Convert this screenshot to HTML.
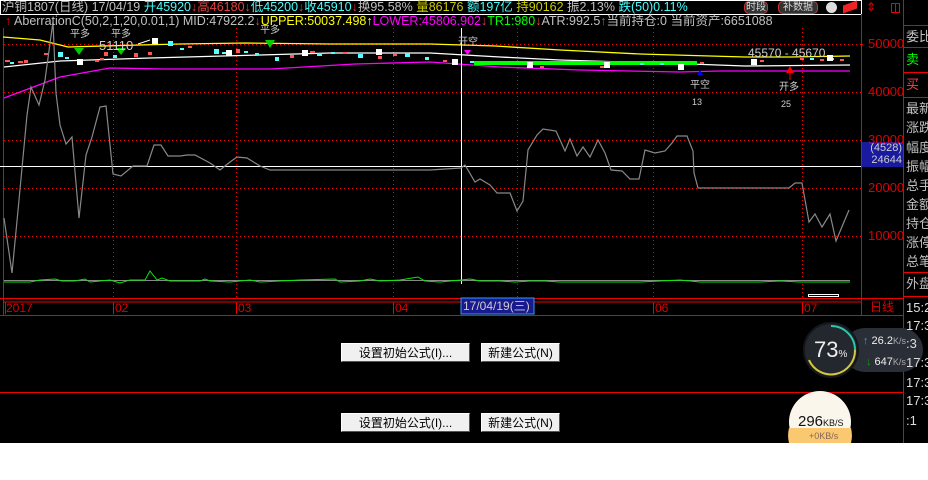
<!DOCTYPE html>
<html><head><meta charset="utf-8"><style>
body{margin:0;width:928px;height:480px;background:#fff;overflow:hidden;position:relative;font-family:"Liberation Sans","Noto Sans CJK SC",sans-serif}
#bk{position:absolute;left:0;top:0;width:928px;height:443px;background:#000}
.t{position:absolute;white-space:nowrap;font-size:12px;line-height:14px}
.h{font-size:12.5px}
.r{position:absolute;font-size:13px;color:#c0c0c0;left:906px;white-space:nowrap;line-height:16px}
.btn{position:absolute;height:19px;background:#f0f0f0;border:1px solid #fff;border-right-color:#555;border-bottom-color:#555;font-size:12px;line-height:19px;text-align:center;color:#000;box-sizing:border-box}
</style></head><body>
<div id="bk"></div>
<svg width="928" height="480" style="position:absolute;left:0;top:0">
<rect x="0.5" y="0.5" width="861" height="14" fill="none" stroke="#fff"/>
<g stroke="#e00" stroke-width="1" fill="none">
<line x1="3.5" y1="28" x2="3.5" y2="315"/>
<line x1="861.5" y1="14" x2="861.5" y2="315"/>
<line x1="903.5" y1="0" x2="903.5" y2="443"/>
<line x1="0" y1="298.5" x2="904" y2="298.5"/>
<line x1="0" y1="315.5" x2="904" y2="315.5"/>
<line x1="0" y1="392.5" x2="904" y2="392.5"/>
<line x1="904" y1="25.5" x2="928" y2="25.5"/>
<line x1="904" y1="47.5" x2="928" y2="47.5"/>
<line x1="904" y1="72.5" x2="928" y2="72.5"/>
<line x1="904" y1="97.5" x2="928" y2="97.5"/>
<line x1="904" y1="272.5" x2="928" y2="272.5"/>
<line x1="904" y1="296.5" x2="928" y2="296.5"/>
<rect x="891.5" y="3.5" width="8" height="9"/>
<line x1="895.5" y1="3" x2="895.5" y2="12"/>
</g>
<g stroke="#e00" stroke-dasharray="1,3">
<line x1="4" y1="44.5" x2="861" y2="44.5"/><line x1="4" y1="92.5" x2="861" y2="92.5"/>
<line x1="4" y1="140.5" x2="861" y2="140.5"/><line x1="4" y1="188.5" x2="861" y2="188.5"/>
<line x1="4" y1="236.5" x2="861" y2="236.5"/>
<line x1="113.5" y1="28" x2="113.5" y2="298"/><line x1="236.5" y1="28" x2="236.5" y2="298"/>
<line x1="393.5" y1="28" x2="393.5" y2="298"/><line x1="517.5" y1="28" x2="517.5" y2="298"/>
<line x1="653.5" y1="28" x2="653.5" y2="298"/><line x1="802.5" y1="28" x2="802.5" y2="298"/>
<line x1="862" y1="44.5" x2="866" y2="44.5"/>
</g>
<g stroke="#e00"><line x1="4" y1="302" x2="861" y2="302"/>
<line x1="113.5" y1="302" x2="113.5" y2="314"/><line x1="236.5" y1="302" x2="236.5" y2="314"/><line x1="393.5" y1="302" x2="393.5" y2="314"/><line x1="653.5" y1="302" x2="653.5" y2="314"/><line x1="802.5" y1="302" x2="802.5" y2="314"/><line x1="5.5" y1="302" x2="5.5" y2="314"/></g>
<line x1="0" y1="166.5" x2="861" y2="166.5" stroke="#fff"/>
<polyline fill="none" stroke="#ff0" stroke-width="1.3" points="3,37 40,40 68,47 140,45 180,44 245,43 330,44 430,44 495,46 560,50 640,54 745,57 790,57 850,56"/>
<polyline fill="none" stroke="#fff" stroke-width="1.3" points="4,67 60,61 150,58 260,55 330,53 430,53 500,57 560,60 690,64 745,66 850,65"/>
<polyline fill="none" stroke="#f0f" stroke-width="1.3" points="4,98 60,77 110,68 165,69 270,69 355,64 430,62 500,67 580,70 680,72 720,71 850,71"/>
<rect x="474" y="61" width="223" height="4" fill="#0f0"/>
<g fill="#f55"><rect x="5" y="60" width="5" height="2"/><rect x="18" y="61" width="5" height="2"/><rect x="24" y="60" width="4" height="3"/><rect x="44" y="53" width="4" height="2"/><rect x="95" y="60" width="4" height="2"/><rect x="100" y="58" width="4" height="2"/><rect x="104" y="52" width="4" height="4"/><rect x="134" y="53" width="4" height="4"/><rect x="148" y="52" width="4" height="3"/><rect x="188" y="46" width="4" height="2"/><rect x="236" y="49" width="4" height="4"/><rect x="290" y="55" width="4" height="3"/><rect x="310" y="51" width="5" height="2"/><rect x="343" y="52" width="4" height="2"/><rect x="378" y="56" width="4" height="3"/><rect x="393" y="54" width="4" height="2"/><rect x="443" y="60" width="4" height="2"/><rect x="540" y="66" width="4" height="2"/><rect x="600" y="66" width="4" height="2"/><rect x="700" y="62" width="4" height="2"/><rect x="760" y="60" width="4" height="2"/><rect x="800" y="58" width="4" height="2"/><rect x="820" y="59" width="4" height="2"/><rect x="840" y="59" width="4" height="2"/></g>
<g fill="#5ff"><rect x="10" y="62" width="4" height="2"/><rect x="58" y="52" width="5" height="5"/><rect x="65" y="57" width="4" height="2"/><rect x="113" y="55" width="4" height="3"/><rect x="168" y="41" width="5" height="5"/><rect x="180" y="48" width="4" height="2"/><rect x="214" y="49" width="5" height="5"/><rect x="222" y="52" width="4" height="2"/><rect x="244" y="51" width="4" height="2"/><rect x="255" y="53" width="4" height="2"/><rect x="275" y="57" width="4" height="4"/><rect x="317" y="53" width="5" height="3"/><rect x="331" y="52" width="4" height="2"/><rect x="358" y="54" width="5" height="4"/><rect x="405" y="53" width="5" height="4"/><rect x="425" y="57" width="4" height="3"/><rect x="470" y="61" width="4" height="2"/><rect x="640" y="63" width="4" height="2"/><rect x="660" y="63" width="4" height="2"/><rect x="810" y="58" width="4" height="2"/><rect x="830" y="58" width="4" height="2"/></g>
<g fill="#fff"><rect x="77" y="59" width="6" height="6"/><rect x="152" y="38" width="6" height="6"/><rect x="226" y="50" width="6" height="6"/><rect x="302" y="50" width="6" height="6"/><rect x="376" y="49" width="6" height="6"/><rect x="452" y="59" width="6" height="6"/><rect x="527" y="62" width="6" height="6"/><rect x="604" y="62" width="6" height="6"/><rect x="678" y="64" width="6" height="6"/><rect x="751" y="59" width="6" height="6"/><rect x="827" y="55" width="6" height="6"/></g>
<line x1="138" y1="44" x2="150" y2="40" stroke="#fff"/>
<g fill="#0c0"><polygon points="74,48 84,48 79,55"/><polygon points="116,48 126,48 121,55"/><polygon points="265,40 275,40 270,48"/></g>
<polygon points="464,50 471,50 467.5,55" fill="#f0f"/>
<polygon points="697,75 703,75 700,70" fill="#00f"/>
<polygon points="786,73 794,73 790,66" fill="#f00"/>
<line x1="790" y1="73" x2="790" y2="80" stroke="#f00"/>
<line x1="461.5" y1="28" x2="461.5" y2="284" stroke="#fff"/>
<polyline fill="none" stroke="#888" stroke-width="1.2" points="4,218 12,273 19,200 27,115 31,87 39,105 45,80 51,36 53,22 56,93 60,125 66,144 72,137 79,218 86,155 92,137 100,107 106,106 113,174 121,176 133,166 147,166 154,145 161,145 168,156 180,156 187,155 195,155 210,163 220,170 230,162 237,157 247,158 260,166 270,170 430,170 461,168 465,165 475,182 480,179 490,185 497,193 510,193 517,211 523,201 528,150 537,135 543,129 556,131 565,151 570,139 577,156 583,147 590,157 598,140 605,153 611,170 622,171 630,179 639,179 645,150 655,153 665,151 672,143 677,136 687,136 693,151 694,173 698,188 700,188 789,188 795,183 802,183 809,222 815,214 822,227 830,214 836,241 849,210"/>
<line x1="4" y1="280.5" x2="850" y2="280.5" stroke="#888"/>
<polyline fill="none" stroke="#0e0" points="4,282 30,282 40,280 55,279 62,281 75,281 85,279 90,282 110,280 120,283 130,280 145,280 150,271 157,280 162,278 170,281 200,281 205,279 210,281 230,282 250,280 260,282 300,280 335,279 340,282 360,281 370,279 380,281 400,280 418,277 425,281 440,282 461,280 470,279 480,281 500,281 515,282 530,281 545,281 560,282 600,282 640,282 680,280 700,282 760,282 780,281 800,282 850,282"/>
<rect x="808.5" y="294.5" width="30" height="2" fill="none" stroke="#fff"/>
<rect x="461" y="298" width="73" height="16" fill="#1a1a90" stroke="#39f"/>
<rect x="862" y="142" width="41" height="25" fill="#1a1aa0"/>
<rect x="843" y="328" width="80" height="44" rx="22" fill="#2a2e36"/>
<circle cx="831" cy="350" r="27" fill="#23272e" stroke="#15171b" stroke-width="2"/>
<path d="M831 326 A24 24 0 0 1 855 350" fill="none" stroke="#2cc6a8" stroke-width="2"/>
<path d="M855 350 A24 24 0 0 1 809 360" fill="none" stroke="#d8c840" stroke-width="2"/>
<circle cx="820" cy="422" r="31" fill="#fbf6ec"/>
<path d="M789 428 L851 428 A31 31 0 0 1 851 443 L789 443 A31 31 0 0 1 789 428Z" fill="#f9c870"/>
<rect x="780" y="443" width="148" height="37" fill="#fff"/>
</svg>
<div class="t h" style="left:2px;top:0;color:#c0c0c0">沪铜1807(日线) 17/04/19 <span style="color:#4ff">开45920</span><span style="color:#e04040">↓高46180↓</span><span style="color:#4ff">低45200</span><span style="color:#e04040">↓</span><span style="color:#4ff">收45910</span><span style="color:#e04040">↓</span><span style="color:#c0c0c0">换95.58%</span> <span style="color:#cc0">量86176</span> <span style="color:#4ff">额197亿</span> <span style="color:#cc0">持90162</span> 振2.13% <span style="color:#4ff">跌(50)0.11%</span></div>
<div class="t" style="left:744px;top:1px;width:22px;height:11px;border:1px solid #c33;border-radius:5px;background:#333;font-size:10px;line-height:11px;color:#ddd;text-align:center">时段</div>
<div class="t" style="left:778px;top:1px;width:38px;height:11px;border:1px solid #c33;border-radius:5px;background:#333;font-size:10px;line-height:11px;color:#ddd;text-align:center">补数据</div>
<div class="t" style="left:826px;top:2px;width:11px;height:11px;border-radius:6px;background:#ddd"></div>
<div class="t" style="left:843px;top:3px;width:14px;height:8px;background:#e22;transform:skewY(-20deg)"></div>
<div class="t" style="left:866px;top:0;color:#e00;font-size:12px">⇕</div>
<div class="t h" style="left:5px;top:14px;color:#c0c0c0"><span style="color:#f00">↑</span> AberrationC(50,2,1,20,0.01,1) MID:47922.2<span style="color:#e04040">↓</span><span style="color:#ff0">UPPER:50037.498↑</span><span style="color:#f0f">LOWER:45806.902</span><span style="color:#e04040">↓</span><span style="color:#0f0">TR1:980</span><span style="color:#e04040">↓</span>ATR:992.5<span style="color:#e04040">↑</span>当前持仓:0 当前资产:6651088</div>
<div class="t" style="left:70px;top:28px;color:#ccc;font-size:10px">平多</div>
<div class="t" style="left:111px;top:28px;color:#ccc;font-size:10px">平多</div>
<div class="t" style="left:260px;top:24px;color:#ccc;font-size:10px">平多</div>
<div class="t" style="left:458px;top:36px;color:#ccc;font-size:10px">开空</div>
<div class="t" style="left:99px;top:39px;color:#ccc;font-size:13px">51110</div>
<div class="t" style="left:748px;top:46px;color:#ccc;font-size:12px">45570 - 45670</div>
<div class="t" style="left:690px;top:79px;color:#ccc;font-size:10px">平空</div>
<div class="t" style="left:692px;top:95px;color:#ccc;font-size:9px">13</div>
<div class="t" style="left:779px;top:81px;color:#ccc;font-size:10px">开多</div>
<div class="t" style="left:781px;top:97px;color:#ccc;font-size:9px">25</div>
<div class="t" style="left:868px;top:37px;color:#d00;font-size:13px">50000</div>
<div class="t" style="left:868px;top:85px;color:#d00;font-size:13px">40000</div>
<div class="t" style="left:868px;top:133px;color:#d00;font-size:13px">30000</div>
<div class="t" style="left:868px;top:181px;color:#d00;font-size:13px">20000</div>
<div class="t" style="left:868px;top:229px;color:#d00;font-size:13px">10000</div>
<div class="t" style="left:863px;top:142px;color:#ccc;font-size:11px;line-height:12px;text-align:right;width:39px">(4528)<br>24644</div>
<div class="t" style="left:6px;top:301px;color:#d00;font-size:12px">2017</div>
<div class="t" style="left:115px;top:301px;color:#d00;font-size:12px">02</div>
<div class="t" style="left:238px;top:301px;color:#d00;font-size:12px">03</div>
<div class="t" style="left:395px;top:301px;color:#d00;font-size:12px">04</div>
<div class="t" style="left:463px;top:299px;color:#ccc;font-size:12px">17/04/19(三)</div>
<div class="t" style="left:655px;top:301px;color:#d00;font-size:12px">06</div>
<div class="t" style="left:804px;top:301px;color:#d00;font-size:12px">07</div>
<div class="t" style="left:870px;top:300px;color:#d00;font-size:12px">日线</div>
<div class="r" style="top:29px">委比</div>
<div class="r" style="top:52px;color:#0f0">卖</div>
<div class="r" style="top:77px;color:#f44">买</div>
<div class="r" style="top:101px">最新</div>
<div class="r" style="top:120px">涨跌</div>
<div class="r" style="top:140px">幅度</div>
<div class="r" style="top:159px">振幅</div>
<div class="r" style="top:178px">总手</div>
<div class="r" style="top:197px">金额</div>
<div class="r" style="top:216px">持仓</div>
<div class="r" style="top:235px">涨停</div>
<div class="r" style="top:254px">总笔</div>
<div class="r" style="top:276px">外盘</div>
<div class="r" style="top:300px;color:#ddd">15:2</div>
<div class="r" style="top:318px;color:#ddd">17:3</div>
<div class="r" style="top:336px;color:#ddd">:3</div>
<div class="r" style="top:355px;color:#ddd">17:3</div>
<div class="r" style="top:375px;color:#ddd">17:3</div>
<div class="r" style="top:393px;color:#ddd">17:3</div>
<div class="r" style="top:413px;color:#ddd">:1</div>
<div class="btn" style="left:341px;top:343px;width:129px">设置初始公式(I)...</div>
<div class="btn" style="left:481px;top:343px;width:79px">新建公式(N)</div>
<div class="btn" style="left:341px;top:413px;width:129px">设置初始公式(I)...</div>
<div class="btn" style="left:481px;top:413px;width:79px">新建公式(N)</div>
<div class="t" style="left:814px;top:338px;color:#eee;font-size:22px;line-height:24px">73<span style="font-size:10px">%</span></div>
<div class="t" style="left:863px;top:334px;color:#eee;font-size:11px"><span style="color:#39f">↑</span> 26.2<span style="font-size:9px;color:#aaa">K/s</span></div>
<div class="t" style="left:866px;top:355px;color:#eee;font-size:11px"><span style="color:#0a0">↓</span> 647<span style="font-size:9px;color:#aaa">K/s</span></div>
<div class="t" style="left:798px;top:414px;color:#111;font-size:15px;line-height:16px">296<span style="font-size:9px">KB/S</span></div>
<div class="t" style="left:809px;top:431px;color:#865;font-size:9px;line-height:11px">+0KB/s</div>
</body></html>
